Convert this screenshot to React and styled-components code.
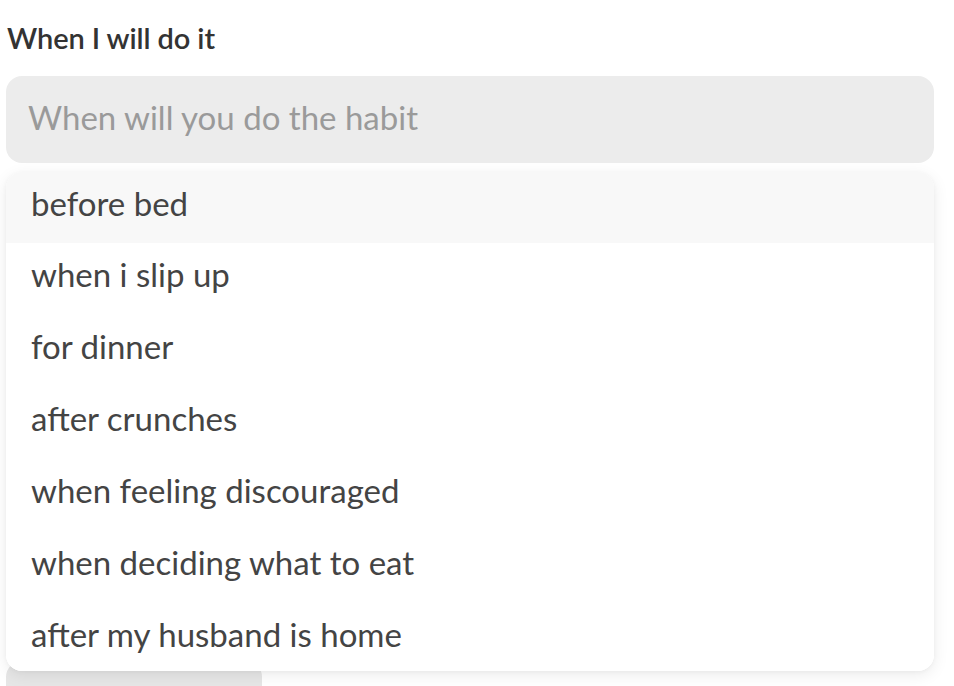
import React from 'react';
import styled, { createGlobalStyle } from 'styled-components';

const Global = createGlobalStyle`
  body {
    margin: 0;
    background: #fff;
    font-family: Lato, "Noto Sans", sans-serif;
  }
`;

const options = [
  'before bed',
  'when i slip up',
  'for dinner',
  'after crunches',
  'when feeling discouraged',
  'when deciding what to eat',
  'after my husband is home'
];

function App() {
  return (
    <Page>
      <Global />
      <Label>When I will do it</Label>
      <Input placeholder='When will you do the habit' />
      <Menu>
        {options.map((item, i) => {
          return (
            <Option key={item} active={i === 0}>
              {item}
            </Option>
          );
        })}
      </Menu>
      <Behind />
    </Page>
  );
}

const Page = styled.div`
  padding: 0 20px 0 6px;
  height: 686px;
  overflow: hidden;
  display: flex;
  flex-direction: column;
  & > * {
    flex-shrink: 0;
  }
`;
const Label = styled.div`
  margin: 21px 0 0 1px;
  height: 39px;
  line-height: 34px;
  font-size: 29px;
  font-weight: 600;
  color: #333;
  letter-spacing: -0.1px;
`;
const Input = styled.input`
  margin-top: 16px;
  height: 87px;
  box-sizing: border-box;
  border: none;
  outline: none;
  border-radius: 16px;
  background: #ececec;
  padding: 0 22px 5px;
  font-family: inherit;
  font-size: 33px;
  color: #444;
  &::placeholder {
    color: #9a9a9a;
  }
`;
const Menu = styled.div`
  position: relative;
  z-index: 1;
  margin-top: 9px;
  height: 499px;
  background: #fff;
  border-radius: 16px;
  overflow: hidden;
  box-shadow: 0 4px 16px rgba(0, 0, 0, 0.08), 0 1px 4px rgba(0, 0, 0, 0.04);
`;
const Option = styled.div`
  height: 72px;
  display: flex;
  align-items: center;
  padding: 0 25px 10px;
  box-sizing: border-box;
  font-size: 33px;
  color: #444;
  background: ${({ active }) => (active ? '#f8f8f8' : '#fff')};
  &:first-child {
    height: 71px;
  }
`;
const Behind = styled.div`
  width: 256px;
  height: 40px;
  margin-top: -10px;
  border-radius: 16px;
  background: #e6e6e6;
`;

export default App;
